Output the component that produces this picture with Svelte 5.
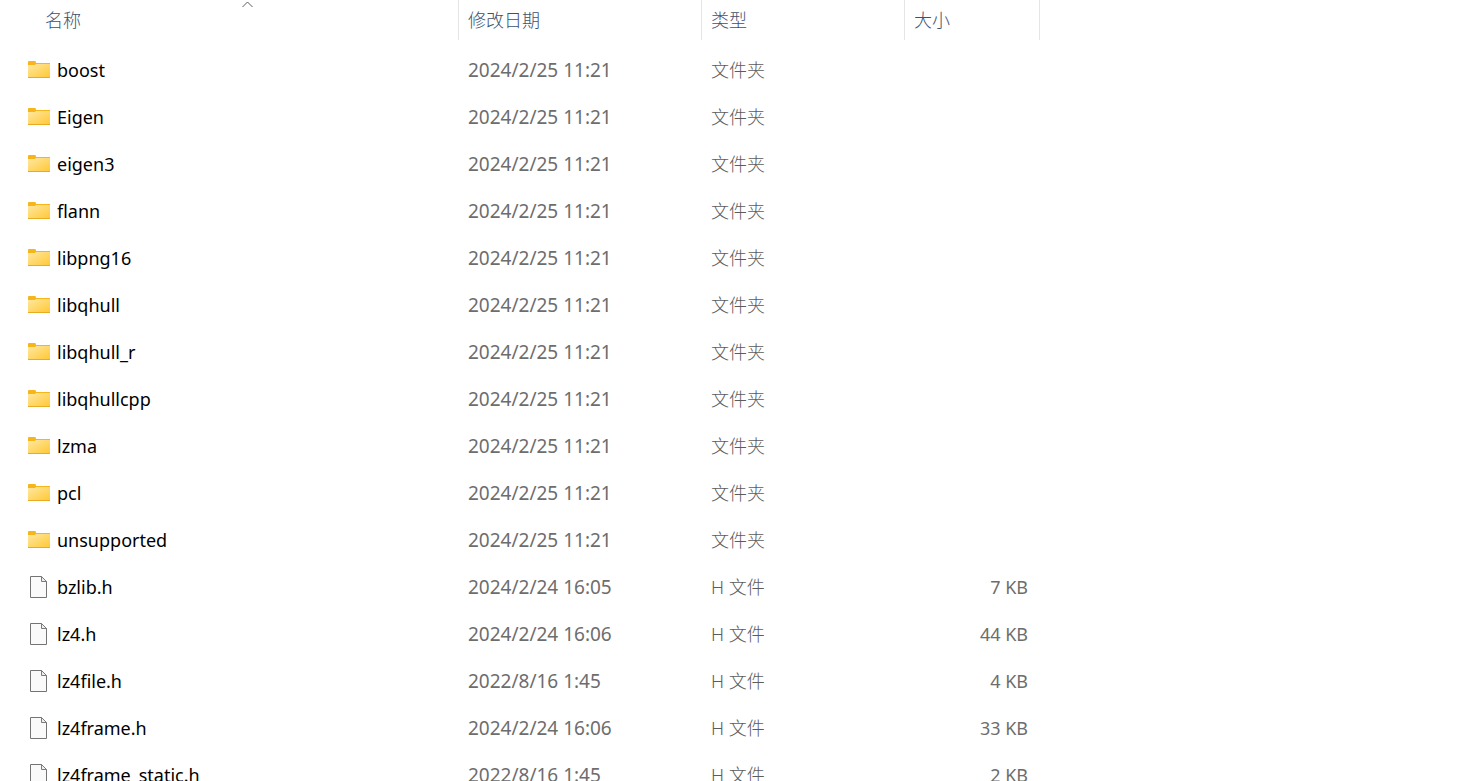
<script lang="ts">
  type Entry = { name: string; date: string; type: string; size?: string };

  const folders = ['boost', 'Eigen', 'eigen3', 'flann', 'libpng16', 'libqhull', 'libqhull_r', 'libqhullcpp', 'lzma', 'pcl', 'unsupported'];

  const entries: Entry[] = [
    ...folders.map((name) => ({ name, date: '2024/2/25 11:21', type: '文件夹' })),
    { name: 'bzlib.h', date: '2024/2/24 16:05', type: 'H 文件', size: '7 KB' },
    { name: 'lz4.h', date: '2024/2/24 16:06', type: 'H 文件', size: '44 KB' },
    { name: 'lz4file.h', date: '2022/8/16 1:45', type: 'H 文件', size: '4 KB' },
    { name: 'lz4frame.h', date: '2024/2/24 16:06', type: 'H 文件', size: '33 KB' },
    { name: 'lz4frame_static.h', date: '2022/8/16 1:45', type: 'H 文件', size: '2 KB' },
  ];
</script>

<main class="explorer">
  <table class="files">
    <colgroup>
      <col class="col-name" />
      <col class="col-date" />
      <col class="col-type" />
      <col class="col-size" />
      <col />
    </colgroup>
    <thead>
      <tr>
        <th class="name" aria-sort="ascending">
          <button type="button">名称</button>
          <svg class="sort" viewBox="0 0 12 7" width="12" height="7" aria-hidden="true">
            <path d="M0.5 6 L5.5 1 L10.5 6" fill="none" stroke="#5c5c5c" />
          </svg>
        </th>
        <th><button type="button">修改日期</button></th>
        <th><button type="button">类型</button></th>
        <th><button type="button">大小</button></th>
        <td></td>
      </tr>
    </thead>
    <tbody>
      {#each entries as entry}
        <tr>
          <td class="name">
            <div class="label">
              {#if entry.size}
                <svg viewBox="0 0 24 24" width="24" height="24" aria-hidden="true">
                  <path d="M3.5 1.5 H14.5 L19.5 6.5 V22.5 H3.5 Z" fill="#fafafa" stroke="#747474" />
                  <path d="M14.5 1.5 V6.5 H19.5 Z" fill="#eee" stroke="#7b7b7b" />
                </svg>
              {:else}
                <svg viewBox="0 0 24 24" width="24" height="24" aria-hidden="true">
                  <defs>
                    <linearGradient id="folder" x1="0" y1="0" x2="1" y2="1">
                      <stop offset="0" stop-color="#ffe8a2" />
                      <stop offset="1" stop-color="#ffc937" />
                    </linearGradient>
                  </defs>
                  <path d="M1 4 Q1 3 2 3 H8 Q9 3 9 5 H23 V19 H1 Z" fill="#f7b51c" />
                  <path d="M1 7 H8 L9 6 H23 V19 H1 Z" fill="url(#folder)" />
                  <path d="M1 19.5 H23" stroke="#e8ac24" />
                </svg>
              {/if}
              <span>{entry.name}</span>
            </div>
          </td>
          <td class="date">{entry.date}</td>
          <td class="type">{entry.type}</td>
          <td class="size">{entry.size ?? ''}</td>
          <td></td>
        </tr>
      {/each}
    </tbody>
  </table>
</main>

<style>
  :global(body) {
    margin: 0;
    background: #fff;
  }

  .explorer {
    height: 100vh;
    overflow: hidden;
    font-family: 'Segoe UI', 'Noto Sans', 'Noto Sans CJK SC', sans-serif;
    font-size: 18px;
    line-height: 24px;
    color: #6d6d6d;
  }

  .files {
    width: 100%;
    table-layout: fixed;
    border-collapse: separate;
    border-spacing: 0;
  }

  .col-name {
    width: 459px;
  }

  .col-date {
    width: 243px;
  }

  .col-type {
    width: 203px;
  }

  .col-size {
    width: 135px;
  }

  th,
  td {
    box-sizing: border-box;
    padding: 0 12px 0 9px;
    text-align: left;
    font-weight: 400;
    white-space: nowrap;
  }

  th {
    position: relative;
    height: 40px;
    border-right: 1px solid #e5e5e5;
    font-weight: 300;
  }

  th.name {
    padding-left: 45px;
  }

  th button {
    padding: 0;
    border: 0;
    background: none;
    font: inherit;
    color: #3c5270;
  }

  .sort {
    position: absolute;
    top: 1px;
    left: 242px;
  }

  tbody::before {
    content: '';
    display: block;
    height: 6px;
  }

  tbody td {
    height: 47px;
  }

  td.name {
    padding-left: 27px;
    color: #000;
  }

  .label {
    display: flex;
    align-items: center;
    gap: 6px;
  }

  .date {
    font-size: 19px;
  }

  .type {
    font-weight: 300;
    color: #5c5c5c;
  }

  .size {
    text-align: right;
  }
</style>
